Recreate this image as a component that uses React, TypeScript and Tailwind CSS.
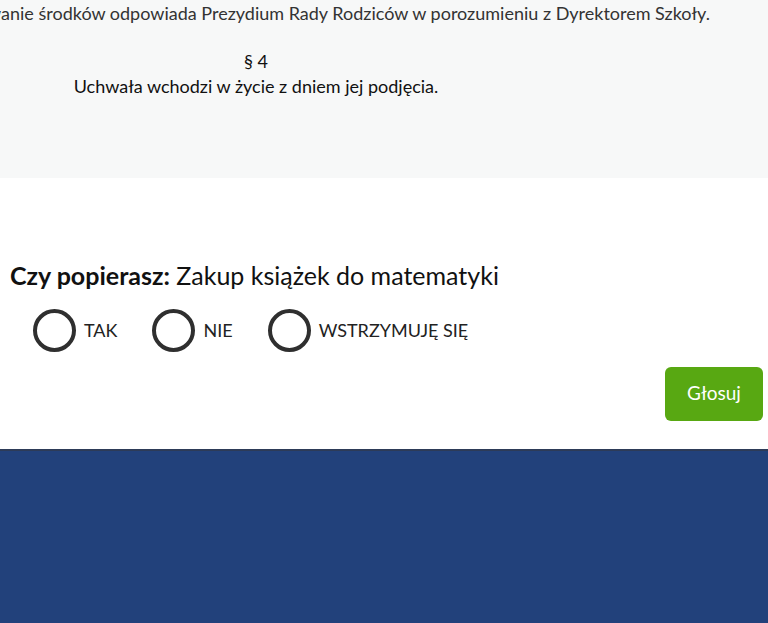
const font = { fontFamily: "Lato, 'Open Sans', sans-serif" };

const options = ["TAK", "NIE", "WSTRZYMUJĘ SIĘ"];

function RadioOption({ label }: { label: string }) {
  return (
    <label className="flex items-center gap-[8px]">
      <span className="h-[43px] w-[43px] rounded-full border-[4px] border-[#2f2f2f] bg-white" />
      <span className="text-[18px] text-[#222]">{label}</span>
    </label>
  );
}

export default function App() {
  return (
    <div className="min-h-[623px] w-full overflow-hidden bg-white" style={font}>
      <section className="h-[178px] bg-[#f7f8f8] pt-[1px] text-[18px] leading-[25px] text-[#333]">
        <div className="flex w-[710px] justify-end">
          <p className="whitespace-nowrap">
            Za wydatkowanie środków odpowiada Prezydium Rady Rodziców w porozumieniu z Dyrektorem Szkoły.
          </p>
        </div>
        <div className="mt-[23px] flex w-[512px] flex-col items-center text-[#111]">
          <p>§ 4</p>
          <p>Uchwała wchodzi w życie z dniem jej podjęcia.</p>
        </div>
      </section>

      <section className="h-[271px] px-[10px] pt-[79px]">
        <h2 className="text-[25px] text-[#111]">
          <span className="font-bold">Czy popierasz:</span> Zakup książek do matematyki
        </h2>
        <div className="mt-[14px] flex gap-[35px] pl-[23px]">
          {options.map((o) => (
            <RadioOption key={o} label={o} />
          ))}
        </div>
        <div className="mt-[15px] flex justify-end">
          <button
            type="button"
            className="mr-[-5px] h-[54px] w-[98px] rounded-[6px] bg-[#58a812] text-[19px] text-white"
          >
            Głosuj
          </button>
        </div>
      </section>

      <footer className="h-[174px] border-t-2 border-[#2d3b58] bg-[#22417b]" />
    </div>
  );
}
